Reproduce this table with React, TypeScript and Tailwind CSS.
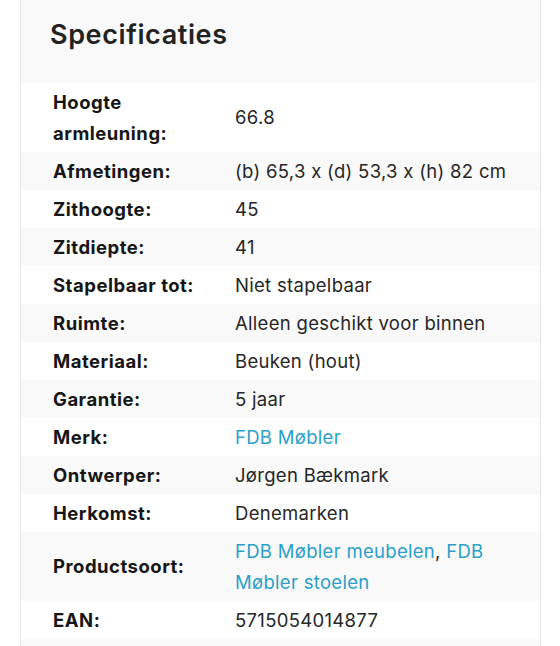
const specs: { label: string; value: React.ReactNode }[] = [
  { label: "Hoogte armleuning:", value: "66.8" },
  { label: "Afmetingen:", value: "(b) 65,3 x (d) 53,3 x (h) 82 cm" },
  { label: "Zithoogte:", value: "45" },
  { label: "Zitdiepte:", value: "41" },
  { label: "Stapelbaar tot:", value: "Niet stapelbaar" },
  { label: "Ruimte:", value: "Alleen geschikt voor binnen" },
  { label: "Materiaal:", value: "Beuken (hout)" },
  { label: "Garantie:", value: "5 jaar" },
  { label: "Merk:", value: <a className="text-[#2a9fc8]">FDB Møbler</a> },
  { label: "Ontwerper:", value: "Jørgen Bækmark" },
  { label: "Herkomst:", value: "Denemarken" },
  {
    label: "Productsoort:",
    value: (
      <>
        <a className="text-[#2a9fc8]">FDB Møbler meubelen</a>, <a className="text-[#2a9fc8]">FDB Møbler stoelen</a>
      </>
    ),
  },
  { label: "EAN:", value: "5715054014877" },
  { label: "", value: "" },
];

export default function App() {
  return (
    <div
      className="h-[646px] w-[560px] overflow-hidden bg-white text-[#222]"
      style={{ fontFamily: "Inter, 'Noto Sans', sans-serif" }}
    >
      <div className="ml-[20px] w-[521px] border-x border-[#e4e4e4]">
        <div className="h-[83px] bg-[#f9f9f9] pl-[29px] pt-[17px]">
          <h2 className="text-[27px] font-semibold leading-[36px] tracking-[0.6px] text-[#222]">Specificaties</h2>
        </div>
        <div>
          {specs.map((row, i) => (
            <div
              key={i}
              className={`grid grid-cols-[214px_1fr] items-center py-[3.5px] text-[18.5px] leading-[31px] ${
                i % 2 === 1 ? "bg-[#f9f9f9]" : "bg-white"
              }`}
            >
              <div className="pl-[32px] pr-[8px] font-bold tracking-[0.5px] text-[#161616]">{row.label || "\u00a0"}</div>
              <div className="pr-[24px] tracking-[0.3px] text-[#262626]">{row.value}</div>
            </div>
          ))}
        </div>
      </div>
    </div>
  );
}
